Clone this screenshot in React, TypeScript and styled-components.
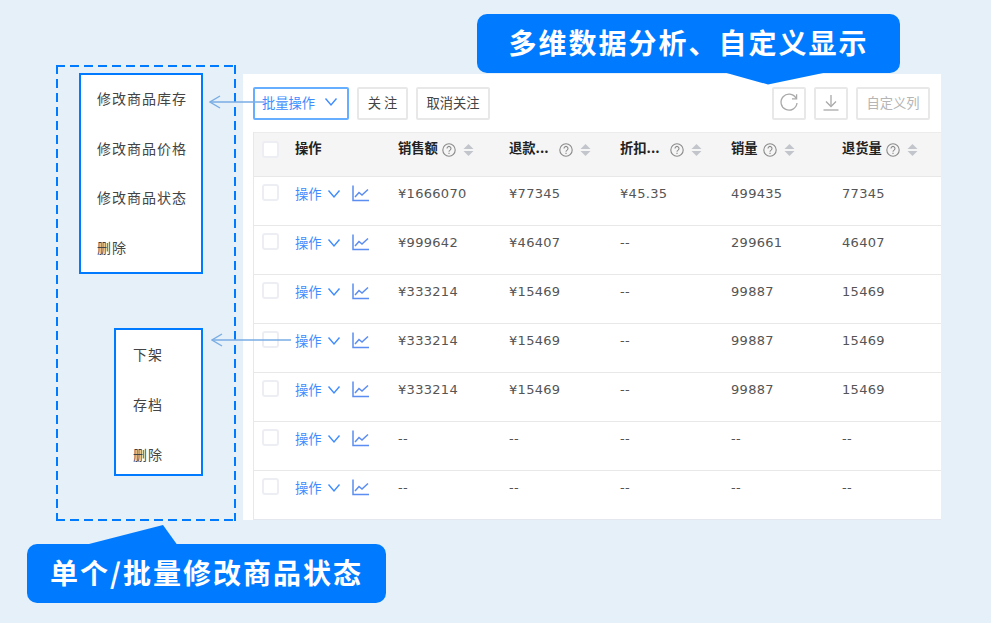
import React from 'react';
import styled, { createGlobalStyle } from 'styled-components';

const GlobalStyle = createGlobalStyle`
  html, body {
    margin: 0;
    padding: 0;
    background: #e5f0f9;
  }
  body {
    font-family: "DejaVu Sans", "Noto Sans CJK SC", sans-serif;
  }
`;

const BLUE = '#007bff';
const LINK = '#3f8cff';

const Page = styled.div`
  position: relative;
  width: 991px;
  height: 623px;
  overflow: hidden;
  box-sizing: border-box;
  padding: 65px 0 0 56px;
  display: flex;
  align-items: flex-start;
  gap: 7px;
  background: #e5f0f9;
`;

/* long dashes, a plain css dashed border comes out too short */
const DashedArea = styled.div`
  box-sizing: border-box;
  width: 180px;
  height: 456px;
  padding: 8px 33px 0 0;
  display: flex;
  flex-direction: column;
  align-items: flex-end;
  gap: 54px;
  background-image:
    repeating-linear-gradient(90deg, ${BLUE} 0 9px, transparent 9px 14px),
    repeating-linear-gradient(90deg, ${BLUE} 0 9px, transparent 9px 14px),
    repeating-linear-gradient(180deg, ${BLUE} 0 9px, transparent 9px 14px),
    repeating-linear-gradient(180deg, ${BLUE} 0 9px, transparent 9px 14px);
  background-size: 100% 2px, 100% 2px, 2px 100%, 2px 100%;
  background-position: 0 0, 0 100%, 0 0, 100% 0;
  background-repeat: no-repeat;
`;

const MenuBox = styled.ul<{ $width: number; $height: number; $inset: number; $top: number; $gap: number }>`
  box-sizing: border-box;
  width: ${(p) => p.$width}px;
  height: ${(p) => p.$height}px;
  margin: 0;
  padding: ${(p) => p.$top}px 0 0 ${(p) => p.$inset}px;
  list-style: none;
  display: flex;
  flex-direction: column;
  gap: ${(p) => p.$gap}px;
  background: #fff;
  border: 2px solid ${BLUE};
`;

const MenuItem = styled.li`
  font-size: 14px;
  letter-spacing: 1px;
  line-height: 20px;
  color: #444;
  font-family: "Noto Sans CJK SC", sans-serif;
`;

const Panel = styled.div`
  box-sizing: border-box;
  width: 698px;
  height: 446px;
  margin-top: 9px;
  padding: 13px 0 0 10px;
  background: #fff;
`;

const Toolbar = styled.div`
  display: flex;
  align-items: center;
  gap: 8px;
  height: 33px;
  padding-right: 11px;
  margin-bottom: 12px;
`;

const ToolButton = styled.button<{ $width: number; $primary?: boolean; $muted?: boolean }>`
  box-sizing: border-box;
  width: ${(p) => p.$width}px;
  height: 33px;
  padding: 0 ${(p) => (p.$primary ? 2 : 0)}px 2px 0;
  display: flex;
  align-items: center;
  justify-content: center;
  gap: 9px;
  background: #fff;
  border: ${(p) => (p.$primary ? '2px solid #66aeff' : '2px solid #e8e8e8')};
  border-radius: 2px;
  color: ${(p) => (p.$primary ? LINK : p.$muted ? '#b5b5b5' : '#444')};
  font-family: "Noto Sans CJK SC", sans-serif;
  font-size: 13.3px;
`;

const Spacer = styled.div`
  flex: 1;
`;

const Table = styled.div`
  border-left: 1px solid #e8e8e8;
  border-bottom: 1px solid #e4e8ee;
`;

const Row = styled.div<{ $head?: boolean }>`
  display: grid;
  grid-template-columns: 41px 103px repeat(5, 111px);
  height: ${(p) => (p.$head ? 45 : 49)}px;
  box-sizing: border-box;
  padding-top: ${(p) => (p.$head ? 9 : 7)}px;
  background: ${(p) => (p.$head ? '#f5f5f5' : '#fff')};
  border-top: ${(p) => (p.$head ? '1px solid #ececec' : 'none')};
  border-bottom: 1px solid #e8e8e8;
  &:last-child {
    height: 48px;
    border-bottom: none;
  }
`;

const Check = styled.span<{ $head?: boolean }>`
  box-sizing: border-box;
  display: block;
  width: 17px;
  height: 17px;
  margin: ${(p) => (p.$head ? -1 : 0)}px 0 0 8px;
  background: #fff;
  border: 2px solid #eceef3;
  border-radius: 3px;
`;

const HeadCell = styled.div`
  display: flex;
  align-items: flex-start;
  gap: 4px;
  font-family: "Noto Sans CJK SC", sans-serif;
  font-size: 13.3px;
  font-weight: 700;
  line-height: 16px;
  color: #222;
`;

const HeadLabel = styled.span<{ $width?: number }>`
  display: inline-block;
  min-width: ${(p) => p.$width ?? 0}px;
  margin-top: -2px;
`;

const Cell = styled.div`
  margin-top: 1px;
  font-family: "DejaVu Sans", "Noto Sans CJK SC", sans-serif;
  font-size: 13px;
  letter-spacing: 0.3px;
  line-height: 18px;
  color: #555;
`;

const Actions = styled.div`
  display: flex;
  align-items: flex-start;
  margin-top: 1px;
  font-family: "Noto Sans CJK SC", sans-serif;
  font-size: 13.3px;
  line-height: 18px;
  color: ${LINK};
`;

const ChevronWrap = styled.span`
  display: inline-flex;
  margin: 4px 11px 0 5px;
`;

const ChartWrap = styled.span`
  display: inline-flex;
  margin-top: 0;
`;

const Callout = styled.div<{ $left: number; $top: number; $width: number }>`
  position: absolute;
  left: ${(p) => p.$left}px;
  top: ${(p) => p.$top}px;
  width: ${(p) => p.$width}px;
  height: 59px;
  box-sizing: border-box;
  padding-bottom: 4px;
  display: flex;
  align-items: center;
  justify-content: center;
  background: ${BLUE};
  border-radius: 10px;
  color: #fff;
  font-family: "Noto Sans CJK SC", sans-serif;
  font-size: 28px;
  font-weight: 700;
  letter-spacing: 2px;
`;

const Pointer = styled.svg`
  position: absolute;
  overflow: visible;
`;

const ArrowLine = styled.svg<{ $left: number; $top: number }>`
  position: absolute;
  left: ${(p) => p.$left}px;
  top: ${(p) => p.$top}px;
`;

const Chevron = ({ size = 14, color = LINK }: { size?: number; color?: string }) => (
  <svg width={size} height={size * 0.72} viewBox="0 0 14 10" fill="none" stroke={color} strokeWidth="1.4">
    <polyline points="1.5,1.5 7,8 12.5,1.5" />
  </svg>
);

const ChartIcon = () => (
  <svg width="17" height="17" viewBox="0 0 17 17" fill="none" stroke="#5c8df0" strokeWidth="1.5">
    <polyline points="1,0.5 1,15.5 17,15.5" />
    <polyline points="3,12 7,7.5 10,10 16,4.5" />
  </svg>
);

const HelpIcon = () => (
  <svg width="14" height="14" viewBox="0 0 14 14" fill="none" stroke="#8a8a8a" strokeWidth="1.1" style={{ marginTop: 1, flexShrink: 0 }}>
    <circle cx="7" cy="7" r="6.2" />
    <path d="M5 5.4a2 2 0 1 1 3.1 1.7c-.8.5-1.1.9-1.1 1.7" />
    <line x1="7" y1="9.8" x2="7" y2="11" />
  </svg>
);

const SortIcon = () => (
  <svg width="11" height="14" viewBox="0 0 11 14" fill="#c2c6cc" style={{ marginLeft: 3, marginTop: 1, flexShrink: 0 }}>
    <polygon points="5.5,1 10.5,6 0.5,6" />
    <polygon points="0.5,8 10.5,8 5.5,13" />
  </svg>
);

const RefreshIcon = () => (
  <svg width="20" height="20" viewBox="0 0 20 20" fill="none" stroke="#a9a9a9" strokeWidth="1.3">
    <path d="M17 5.2A8 8 0 1 0 18 10" />
    <polyline points="17.6,1.2 17.6,5.8 13,5.8" />
  </svg>
);

const DownloadIcon = () => (
  <svg width="18" height="18" viewBox="0 0 18 18" fill="none" stroke="#a9a9a9" strokeWidth="1.3">
    <line x1="9" y1="1" x2="9" y2="11.5" />
    <polyline points="4,7.5 9,12.5 14,7.5" />
    <line x1="1.5" y1="16" x2="16.5" y2="16" />
  </svg>
);

const Arrow = ({ left, top, length }: { left: number; top: number; length: number }) => (
  <ArrowLine $left={left} $top={top} width={length} height="14" viewBox={`0 0 ${length} 14`} fill="none" stroke="#78ade4" strokeWidth="1.4">
    <line x1="1" y1="7" x2={length} y2="7" />
    <polyline points="11,1 1,7 11,13" />
  </ArrowLine>
);

const columns = [
  { label: '销售额', width: 40 },
  { label: '退款...', width: 46 },
  { label: '折扣...', width: 46 },
  { label: '销量', width: 28 },
  { label: '退货量', width: 40 },
];

const rows = [
  ['¥1666070', '¥77345', '¥45.35', '499435', '77345'],
  ['¥999642', '¥46407', '--', '299661', '46407'],
  ['¥333214', '¥15469', '--', '99887', '15469'],
  ['¥333214', '¥15469', '--', '99887', '15469'],
  ['¥333214', '¥15469', '--', '99887', '15469'],
  ['--', '--', '--', '--', '--'],
  ['--', '--', '--', '--', '--'],
];

const App: React.FC = () => (
  <Page>
    <GlobalStyle />
    <DashedArea>
      <MenuBox $width={124} $height={201} $inset={16} $top={13} $gap={29.7}>
        <MenuItem>修改商品库存</MenuItem>
        <MenuItem>修改商品价格</MenuItem>
        <MenuItem>修改商品状态</MenuItem>
        <MenuItem>删除</MenuItem>
      </MenuBox>
      <MenuBox $width={89} $height={148} $inset={17} $top={14} $gap={30}>
        <MenuItem>下架</MenuItem>
        <MenuItem>存档</MenuItem>
        <MenuItem>删除</MenuItem>
      </MenuBox>
    </DashedArea>
    <Panel>
      <Toolbar>
        <ToolButton $width={96} $primary>
          批量操作
          <Chevron />
        </ToolButton>
        <ToolButton $width={51}>关 注</ToolButton>
        <ToolButton $width={74}>取消关注</ToolButton>
        <Spacer />
        <ToolButton $width={34}>
          <RefreshIcon />
        </ToolButton>
        <ToolButton $width={34}>
          <DownloadIcon />
        </ToolButton>
        <ToolButton $width={74} $muted>
          自定义列
        </ToolButton>
      </Toolbar>
      <Table>
        <Row $head>
          <Check $head />
          <HeadCell>
            <HeadLabel>操作</HeadLabel>
          </HeadCell>
          {columns.map((c) => (
            <HeadCell key={c.label}>
              <HeadLabel $width={c.width}>{c.label}</HeadLabel>
              <HelpIcon />
              <SortIcon />
            </HeadCell>
          ))}
        </Row>
        {rows.map((row, i) => (
          <Row key={i}>
            <Check />
            <Actions>
              操作
              <ChevronWrap>
                <Chevron />
              </ChevronWrap>
              <ChartWrap>
                <ChartIcon />
              </ChartWrap>
            </Actions>
            {row.map((value, j) => (
              <Cell key={j}>{value}</Cell>
            ))}
          </Row>
        ))}
      </Table>
    </Panel>
    <Arrow left={209} top={95} length={55} />
    <Arrow left={211} top={333} length={80} />
    <Pointer style={{ left: 720, top: 72 }} width="110" height="14" viewBox="0 0 110 14" fill={BLUE}>
      <polygon points="3,0 48,12.5 108,0" />
    </Pointer>
    <Pointer style={{ left: 85, top: 524 }} width="95" height="22" viewBox="0 0 95 22" fill={BLUE}>
      <polygon points="2,20.5 78,1 92,20.5" />
    </Pointer>
    <Callout $left={477} $top={14} $width={423}>多维数据分析、自定义显示</Callout>
    <Callout $left={27} $top={544} $width={359}>单个/批量修改商品状态</Callout>
  </Page>
);

export default App;
